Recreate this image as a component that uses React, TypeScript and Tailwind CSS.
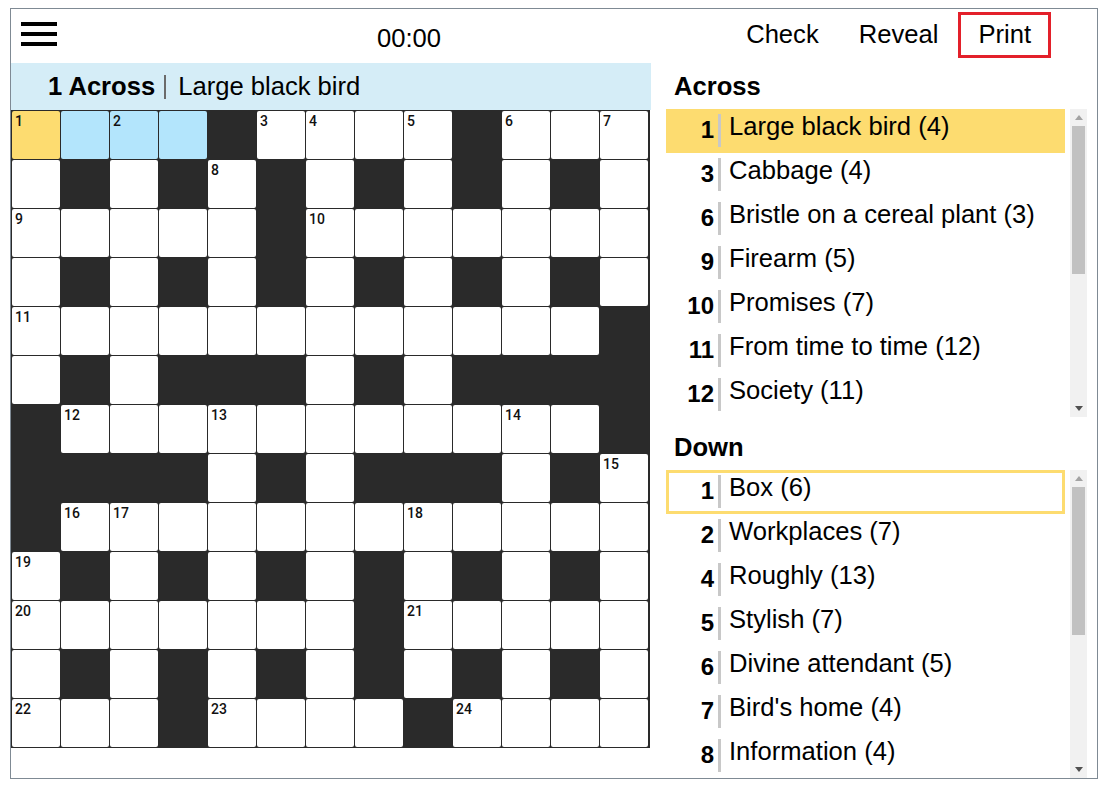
import React from "react";

const LAYOUT = [
  "....#....#...",
  ".#.#.#.#.#.#.",
  ".....#.......",
  ".#.#.#.#.#.#.",
  "............#",
  ".#.###.#.####",
  "#...........#",
  "####.#.###.#.",
  "#............",
  ".#.#.#.#.#.#.",
  ".......#.....",
  ".#.#.#.#.#.#.",
  "...#....#....",
];

const isWhite = (r: number, c: number) =>
  r >= 0 && r < 13 && c >= 0 && c < 13 && LAYOUT[r][c] === ".";

function buildCells() {
  const cells: { r: number; c: number; black: boolean; num?: number }[] = [];
  let n = 0;
  for (let r = 0; r < 13; r++) {
    for (let c = 0; c < 13; c++) {
      if (!isWhite(r, c)) {
        cells.push({ r, c, black: true });
        continue;
      }
      const across = !isWhite(r, c - 1) && isWhite(r, c + 1);
      const down = !isWhite(r - 1, c) && isWhite(r + 1, c);
      let num: number | undefined;
      if (across || down) {
        n += 1;
        num = n;
      }
      cells.push({ r, c, black: false, num });
    }
  }
  return cells;
}

const CELLS = buildCells();

const ACROSS: [number, string][] = [
  [1, "Large black bird (4)"],
  [3, "Cabbage (4)"],
  [6, "Bristle on a cereal plant (3)"],
  [9, "Firearm (5)"],
  [10, "Promises (7)"],
  [11, "From time to time (12)"],
  [12, "Society (11)"],
];

const DOWN: [number, string][] = [
  [1, "Box (6)"],
  [2, "Workplaces (7)"],
  [4, "Roughly (13)"],
  [5, "Stylish (7)"],
  [6, "Divine attendant (5)"],
  [7, "Bird's home (4)"],
  [8, "Information (4)"],
];

function Cell({ r, c, black, num }: { r: number; c: number; black: boolean; num?: number }) {
  if (black) return <div className="w-[48px] h-[48px] bg-[#2a2a2a]" />;
  let bg = "bg-white";
  if (r === 0 && c === 0) bg = "bg-[#fddc70]";
  else if (r === 0 && c >= 1 && c <= 3) bg = "bg-[#b3e5fc]";
  return (
    <div className={`w-[48px] h-[48px] rounded-[2px] ${bg}`}>
      {num !== undefined && (
        <div
          className="pl-[3px] pt-[3px] text-[14px] font-medium leading-none text-[#111]"
          style={{ fontFamily: "Roboto, 'DejaVu Sans', sans-serif" }}
        >
          {num}
        </div>
      )}
    </div>
  );
}

function ScrollArrow({ up }: { up: boolean }) {
  return (
    <div className="h-[17px] flex items-center justify-center">
      <svg width="8" height="5" viewBox="0 0 8 5">
        {up ? <polygon points="4,0 8,5 0,5" fill="#a3a3a3" /> : <polygon points="0,0 8,0 4,5" fill="#505050" />}
      </svg>
    </div>
  );
}

function Scrollbar() {
  return (
    <div className="w-[17px] h-full bg-[#f1f1f1] flex flex-col">
      <ScrollArrow up />
      <div className="mx-[2px] h-[148px] bg-[#c1c1c1]" />
      <div className="flex-1" />
      <ScrollArrow up={false} />
    </div>
  );
}

function ClueRow({ num, text, mode }: { num: number; text: string; mode?: "fill" | "outline" }) {
  const cls =
    mode === "fill"
      ? "bg-[#fddc70] border-transparent"
      : mode === "outline"
      ? "border-[#fddc70]"
      : "border-transparent";
  return (
    <div className={`h-[44px] shrink-0 flex items-stretch border-[3px] ${cls}`}>
      <div className="w-[45px] text-right font-bold text-[24px] leading-[28px] pt-[4px]">{num}</div>
      <div className="ml-[4px] w-[3px] mt-[2px] mb-[3px] bg-[#c8c8c8]" />
      <div className="ml-[8px] text-[25.6px] leading-[28px] whitespace-nowrap">{text}</div>
    </div>
  );
}

function ClueList({ items, active, mode }: { items: [number, string][]; active: number; mode: "fill" | "outline" }) {
  return (
    <div className="flex h-[308px]">
      <div className="w-[399px] overflow-hidden flex flex-col">
        {items.map(([n, t], i) => (
          <ClueRow key={n} num={n} text={t} mode={i === active ? mode : undefined} />
        ))}
      </div>
      <div className="ml-[5px]">
        <Scrollbar />
      </div>
    </div>
  );
}

export default function App() {
  return (
    <div className="pt-[8px] pl-[10px] bg-white text-black" style={{ fontFamily: "'Liberation Sans', Arial, sans-serif" }}>
      <div className="w-[1088px] h-[771px] border border-[#7f8a94] flex flex-col">
        {/* Header */}
        <div className="h-[54px] flex items-center shrink-0">
          <div className="ml-[10px] w-[36px] flex flex-col gap-[6px] -mt-[4px]">
            <div className="h-[4px] bg-black" />
            <div className="h-[4px] bg-black" />
            <div className="h-[4px] bg-black" />
          </div>
          <div className="ml-[320px] mt-[5px] text-[25.6px] leading-none">00:00</div>
          <div className="ml-auto mr-[46px] flex items-center -mt-[3px]">
            <button className="h-[46px] px-[17px] border-[3px] border-transparent text-[25.6px] leading-none">Check</button>
            <button className="h-[46px] px-[17px] border-[3px] border-transparent text-[25.6px] leading-none">Reveal</button>
            <button className="h-[46px] px-[17px] border-[3px] border-[#e3202a] text-[25.6px] leading-none">Print</button>
          </div>
        </div>
        {/* Body */}
        <div className="flex flex-1">
          <div className="w-[640px] flex flex-col">
            <div className="h-[47px] bg-[#d5edf7] flex items-center pl-[37px] text-[25.6px]">
              <span className="font-bold">1 Across</span>
              <span className="ml-[9px] w-[2px] h-[24px] bg-[#6b6b6b]" />
              <span className="ml-[12px]">Large black bird</span>
            </div>
            <div className="w-[639px] bg-[#2a2a2a] p-px grid grid-cols-[repeat(13,48px)] gap-px">
              {CELLS.map((cell) => (
                <Cell key={`${cell.r}-${cell.c}`} {...cell} />
              ))}
            </div>
          </div>
          <div className="ml-[15px] w-[421px] flex flex-col">
            <div className="h-[46px] flex items-center pl-[8px] font-bold text-[25.6px]">Across</div>
            <ClueList items={ACROSS} active={0} mode="fill" />
            <div className="h-[46px] mt-[7px] flex items-center pl-[8px] font-bold text-[25.6px]">Down</div>
            <ClueList items={DOWN} active={0} mode="outline" />
          </div>
        </div>
      </div>
    </div>
  );
}
